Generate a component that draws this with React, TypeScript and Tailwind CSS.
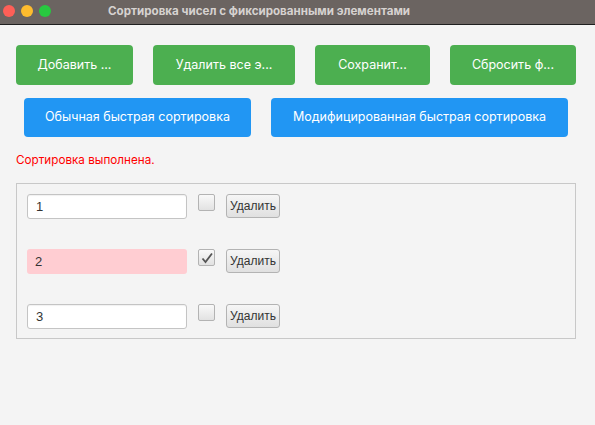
import React from 'react';

const rows = [
  { value: '1', checked: false },
  { value: '2', checked: true },
  { value: '3', checked: false },
];

const GreenButton = ({ label, w }: { label: string; w: string }) => (
  <button className={`${w} h-[40px] rounded-[4px] bg-[#4caf50] text-white text-[12.5px]`}>{label}</button>
);

export default function App() {
  return (
    <div className="w-[595px] h-[425px] bg-[#f4f4f4] flex flex-col overflow-hidden" style={{ fontFamily: 'Inter, "Noto Sans", sans-serif' }}>
      <div className="h-[25px] bg-[#6b6461] border-b border-[#1f1f1f] flex items-center relative shrink-0">
        <div className="flex gap-[6px] pl-[3px] absolute left-0 top-[5px]">
          <span className="w-[12px] h-[12px] rounded-full bg-[#fe5f57]" />
          <span className="w-[12px] h-[12px] rounded-full bg-[#febc2e]" />
          <span className="w-[12px] h-[12px] rounded-full bg-[#28c840]" />
        </div>
        <div className="ml-[108px] text-[11.6px] font-bold text-[#d6d2d0]">Сортировка чисел с фиксированными элементами</div>
      </div>

      <div className="flex pl-[16px] pt-[20px] gap-[20px]">
        <GreenButton label="Добавить ..." w="w-[117px]" />
        <GreenButton label="Удалить все э..." w="w-[142px]" />
        <GreenButton label="Сохранит..." w="w-[115px]" />
        <GreenButton label="Сбросить ф..." w="w-[126px]" />
      </div>

      <div className="flex pl-[24px] pt-[13px] gap-[20px]">
        <button className="w-[227px] h-[39px] rounded-[4px] bg-[#2196f3] text-white text-[12.5px]">Обычная быстрая сортировка</button>
        <button className="w-[297px] h-[39px] rounded-[4px] bg-[#2196f3] text-white text-[12.5px]">Модифицированная быстрая сортировка</button>
      </div>

      <div className="pl-[16px] pt-[15px] text-[11.7px] text-[#ff0000] leading-[16px]">Сортировка выполнена.</div>

      <div className="mx-[16px] mt-[15px] w-[560px] h-[156px] border border-[#c8c8c8] flex flex-col pl-[10px] pt-[10px] gap-[30px]">
        {rows.map((r) => (
          <div key={r.value} className="flex items-start h-[25px]">
            <div
              className={`w-[160px] h-[25px] rounded-[3px] flex items-center pl-[8px] text-[13px] text-[#333] ${
                r.checked ? 'bg-[#ffcdd2]' : 'bg-white border border-[#c4c4c4] shadow-[inset_0_1px_1px_rgba(0,0,0,0.06)]'
              }`}
              style={{ fontFamily: '"Liberation Sans", Arial, sans-serif' }}
            >
              {r.value}
            </div>
            <div className="ml-[11px] w-[17px] h-[17px] border border-[#b3b3b3] rounded-[2px] bg-gradient-to-b from-[#f9f9f9] to-[#e2e2e2] flex items-center justify-center">
              {r.checked && (
                <svg width="14" height="14" viewBox="0 0 14 14">
                  <path d="M2.5 7.5 L5.5 11 L12 2.5" fill="none" stroke="#555" strokeWidth="1.8" />
                </svg>
              )}
            </div>
            <button
              className="ml-[11px] w-[54px] h-[24px] border border-[#b3b3b3] rounded-[3px] bg-gradient-to-b from-[#f6f6f6] to-[#e0e0e0] text-[12px] text-[#333]"
              style={{ fontFamily: '"Liberation Sans", Arial, sans-serif' }}
            >
              Удалить
            </button>
          </div>
        ))}
      </div>
    </div>
  );
}
